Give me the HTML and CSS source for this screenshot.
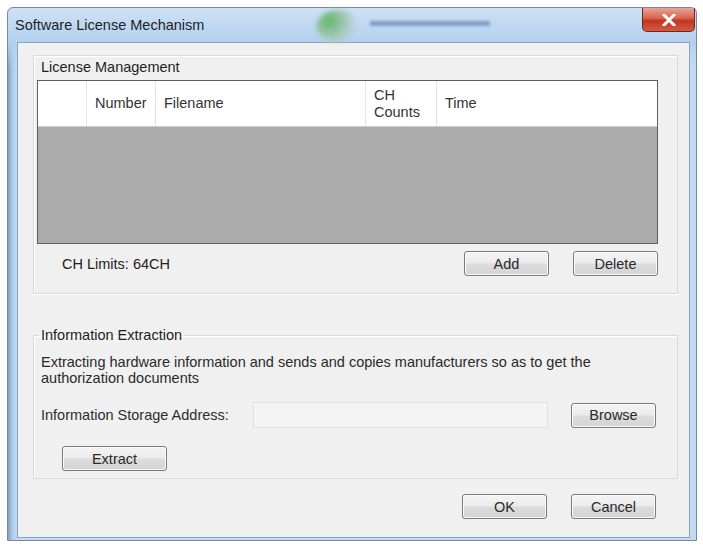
FILE: index.html
```html
<!DOCTYPE html>
<html lang="en">
<head>
  <meta charset="UTF-8" />
  <meta name="viewport" content="width=device-width, initial-scale=1.0"/>
  <title>Software License Mechanism</title>
  <link rel="stylesheet" href="styles.css">
</head>
<body>
  <div class="window">
    <div class="titlebar">
      <span class="title">Software License Mechanism</span>
      <span class="glass-blob"></span>
      <span class="glass-text"></span>
      <button class="close" aria-label="Close">
        <svg width="14" height="12" viewBox="0 0 14 12">
          <path d="M2 1 L12 11 M12 1 L2 11" stroke="#ffffff" stroke-width="3" stroke-linecap="square" fill="none"/>
        </svg>
      </button>
    </div>

    <div class="client">
      <div class="group">
        <div class="group-label">License Management</div>

        <div class="grid">
          <div class="grid-head">
            <div class="cell"></div>
            <div class="cell">Number</div>
            <div class="cell">Filename</div>
            <div class="cell">CH<br>Counts</div>
            <div class="cell">Time</div>
          </div>
          <div class="grid-body"></div>
        </div>

        <div class="limits-row">
          <span class="limits">CH Limits: 64CH</span>
          <div class="btns">
            <button class="btn">Add</button>
            <button class="btn">Delete</button>
          </div>
        </div>
      </div>

      <fieldset class="extract">
        <legend>Information Extraction</legend>
        <p class="note">Extracting hardware information and sends and copies manufacturers so as to get the authorization documents</p>
        <div class="addr-row">
          <span class="addr-label">Information Storage Address:</span>
          <input type="text" class="addr" />
          <button class="btn">Browse</button>
        </div>
        <button class="btn btn-wide">Extract</button>
      </fieldset>

      <div class="footer">
        <button class="btn">OK</button>
        <button class="btn">Cancel</button>
      </div>
    </div>
  </div>
</body>
</html>
```

FILE: styles.css
```css
body { margin: 0; background: #ffffff; font-family: "Liberation Sans", Arial, sans-serif; font-size: 14.5px; color: #2e2e2e; }

.window { margin: 7px 0 0 7px; width: 690px; height: 534px; box-sizing: border-box; border: 1px solid #7d8894; border-radius: 6px 6px 0 0; display: flex; flex-direction: column;
  background-image: linear-gradient(to bottom, #cde1f4 0, #b2d1f0 34px, rgba(183,211,238,0) 60px),
  linear-gradient(to right, #7f9fbe 0, #a9c9e6 4px, #c3dbf2 9px, #c3dbf2 100%); }

.titlebar { height: 34px; display: flex; align-items: flex-start; padding-left: 7px; }
.title { line-height: 34px; color: #1f1f1f; font-size: 14.5px; }
.glass-blob { width: 44px; height: 32px; margin: 2px 0 0 112px; border-radius: 50%; background: radial-gradient(circle at 30% 35%, #62b96c 0, #a7c7b8 45%, rgba(178,209,240,0) 75%); filter: blur(2px); }
.glass-text { width: 120px; height: 5px; margin: 13px 0 0 10px; background: #5d7fae; opacity: .65; filter: blur(1.5px); }
.close { margin-left: auto; margin-right: 1px; width: 53px; height: 24px; border: 1px solid #6b2a20; border-top: 0; border-radius: 0 0 5px 5px;
  background: linear-gradient(to bottom, #e7a595 0, #d6634c 45%, #c2361f 55%, #d25a3f 100%); display: flex; align-items: center; justify-content: center; padding: 0; }

.client { flex: 1; margin: 0 6px 2px 9px; background: #f0f0f0; border: 1px solid #8fa3b8; display: flex; flex-direction: column; }

.group { margin: 12px 11px 0 15px; border: 1px solid #dadada; box-shadow: inset 1px 1px 0 #ffffff, 0 1px 0 #ffffff; padding: 3px 19px 17px 3px; }
.group-label { line-height: 16px; padding-left: 4px; color: #1f1f1f; }

.grid { margin-top: 5px; height: 164px; box-sizing: border-box; border: 1px solid #5e5e5e; display: flex; flex-direction: column; }
.grid-head { height: 45px; background: #ffffff; border-bottom: 1px solid #cfcfcf; display: grid; grid-template-columns: 48px 69px 210px 71px 1fr; }
.cell { border-left: 1px solid #e6e6e6; padding-left: 8px; display: flex; align-items: center; line-height: 17px; color: #333333; }
.cell:first-child { border-left: 0; }
.grid-body { flex: 1; background: #ababab; }

.limits-row { margin-top: 7px; display: flex; align-items: center; justify-content: space-between; }
.limits { padding-left: 25px; color: #222222; }
.btns { display: flex; gap: 24px; }

.btn { width: 85px; height: 25px; padding: 0; border: 1px solid #7a7a7a; border-radius: 3px; font-family: inherit; font-size: 14.5px; color: #2a2a2a;
  background: linear-gradient(to bottom, #f4f4f4 0, #ebebeb 48%, #dcdcdc 52%, #d4d4d4 100%); box-shadow: inset 0 0 0 1px #fbfbfb; }

.extract { margin: 33px 11px 0 15px; padding: 11px 21px 7px 7px; border: 1px solid #dadada; box-shadow: inset 1px 1px 0 #ffffff; min-width: 0; }
.extract legend { padding: 0 2px; margin-left: -2px; line-height: 16px; color: #1f1f1f; }
.note { margin: 0; line-height: 16px; color: #2a2a2a; }
.addr-row { margin-top: 16px; display: flex; align-items: center; }
.addr-label { width: 212px; flex: none; }
.addr { flex: 1; min-width: 0; height: 26px; box-sizing: border-box; border: 1px solid #e0e0e0; background: #f4f4f4; margin: 0 23px 0 0; }
.btn-wide { width: 105px; margin: 18px 0 0 21px; }

.footer { margin: 15px 33px 0 0; display: flex; justify-content: flex-end; gap: 24px; }
```
